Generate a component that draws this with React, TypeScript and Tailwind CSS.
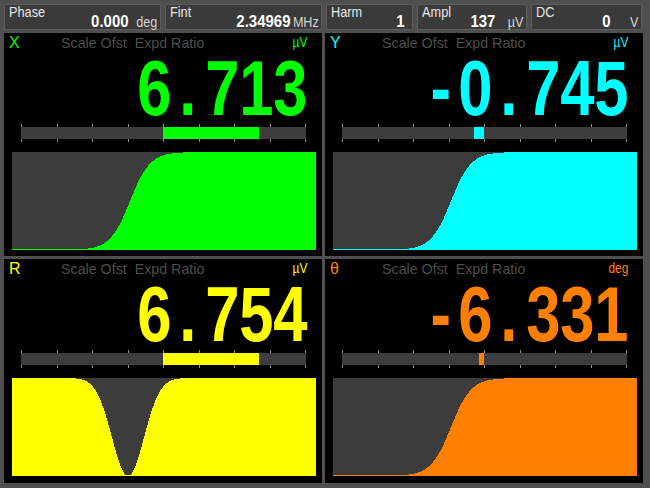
import React from "react";

const W = 304;
const H = 98;

type Curve = (x: number) => number;

const sigmoid: Curve = (x) => 1 / (1 + Math.exp(-(x - 118) / 10));
const dip: Curve = (x) => 1 - Math.exp(-((x - 116) ** 2) / (2 * 16 * 16));

function curvePath(fn: Curve) {
  let d = `M0 ${H}`;
  for (let x = 0; x < W; x++) {
    const h = Math.max(1, Math.round(H * fn(x + 0.5)));
    d += ` L${x} ${H - h} L${x + 1} ${H - h}`;
  }
  return d + ` L${W} ${H} Z`;
}

interface Channel {
  label: string;
  color: string;
  unit: string;
  value: string;
  bar: [number, number];
  curve: Curve;
}

const channels: Channel[] = [
  { label: "X", color: "#00ff00", unit: "µV", value: "6.713", bar: [0, 96], curve: sigmoid },
  { label: "Y", color: "#00ffff", unit: "µV", value: "-0.745", bar: [-10, 0], curve: sigmoid },
  { label: "R", color: "#ffff00", unit: "µV", value: "6.754", bar: [0, 96], curve: dip },
  { label: "θ", color: "#ff8000", unit: "deg", value: "-6.331", bar: [-5, 0], curve: sigmoid },
];

function TopBox({ label, value, unit, className }: { label: string; value: string; unit?: string; className: string }) {
  return (
    <div className={`flex h-[26px] flex-col rounded-[2px] border border-[#5e5e5e] bg-[#3a3a3a] pl-[4px] ${className}`}>
      <div className="h-[8px] text-[15px] leading-[14px] text-[#e8e8e8]">
        <span className="inline-block origin-left scale-x-[0.85]">{label}</span>
      </div>
      <div className="mt-auto flex items-baseline justify-end leading-[17px]">
        <span className="inline-block origin-right scale-x-[0.88] text-[17px] font-bold text-white">{value}</span>
        {unit !== undefined && (
          <span className="w-[31px] pr-[3px] text-right text-[14px] text-[#d6d6d6]">
            <span className="inline-block origin-right scale-x-[0.9]">{unit}</span>
          </span>
        )}
      </div>
    </div>
  );
}

function Panel({ ch }: { ch: Channel }) {
  const center = 142;
  const [a, b] = ch.bar;
  return (
    <div className="flex h-full flex-col bg-black">
      <div className="mt-[1px] flex h-[16px] items-start pl-[5px] pr-[15px] leading-[17px]">
        <span className="w-[52px] text-[16px]" style={{ color: ch.color }}>{ch.label}</span>
        <span className="inline-block origin-left scale-x-[0.95] text-[15px] text-[#4d4d4d]">Scale Ofst&nbsp;&nbsp;Expd Ratio</span>
        <span className="ml-auto inline-block origin-right scale-x-[0.85] text-[14px]" style={{ color: ch.color }}>
          {ch.unit}
        </span>
      </div>
      <div
        className="mt-[10px] flex h-[56px] justify-end pr-[15px] text-[77px] font-bold leading-[56px]"
        style={{ color: ch.color }}
      >
        {ch.value.split("").map((c, i) => (
          <span key={i} className="flex w-[34px] justify-center">
            <span className="inline-block scale-x-[0.8]">{c}</span>
          </span>
        ))}
      </div>
      <div className="relative ml-[17px] mt-[8px] h-[18px] w-[285px]">
        <div className="absolute inset-x-0 top-0 flex h-full justify-between">
          {Array.from({ length: 9 }).map((_, i) => (
            <div key={i} className="h-full w-px bg-[#8c8c8c]" />
          ))}
        </div>
        <div className="absolute inset-x-0 top-[3px] h-[12px] bg-[#3d3d3d]" />
        <div
          className="absolute top-[3px] h-[12px]"
          style={{ left: center + a, width: b - a, backgroundColor: ch.color }}
        />
      </div>
      <div className="ml-[8px] mt-[10px] h-[98px] w-[304px]">
        <svg width={W} height={H} shapeRendering="crispEdges">
          <rect width={W} height={H} fill="#3c3c3c" />
          <path d={curvePath(ch.curve)} fill={ch.color} />
        </svg>
      </div>
    </div>
  );
}

export default function App() {
  return (
    <div className="flex h-[488px] w-[650px] flex-col bg-[#4f4f4f] font-['Liberation_Sans',sans-serif]">
      <div className="flex h-[33px] gap-[4px] pl-[4px] pr-[7px] pt-[4px]">
        <TopBox label="Phase" value="0.000" unit="deg" className="w-[157px]" />
        <TopBox label="Fint" value="2.34969" unit="MHz" className="w-[157px]" />
        <TopBox label="Harm" value="1" className="w-[87px] pr-[8px]" />
        <TopBox label="Ampl" value="137" unit="µV" className="w-[110px]" />
        <TopBox label="DC" value="0" unit="V" className="w-[111px]" />
      </div>
      <div className="grid flex-1 grid-cols-[318px_318px] grid-rows-[223px_224px] gap-[3px] pb-[5px] pl-[4px] pr-[7px]">
        {channels.map((ch) => (
          <Panel key={ch.label} ch={ch} />
        ))}
      </div>
    </div>
  );
}
